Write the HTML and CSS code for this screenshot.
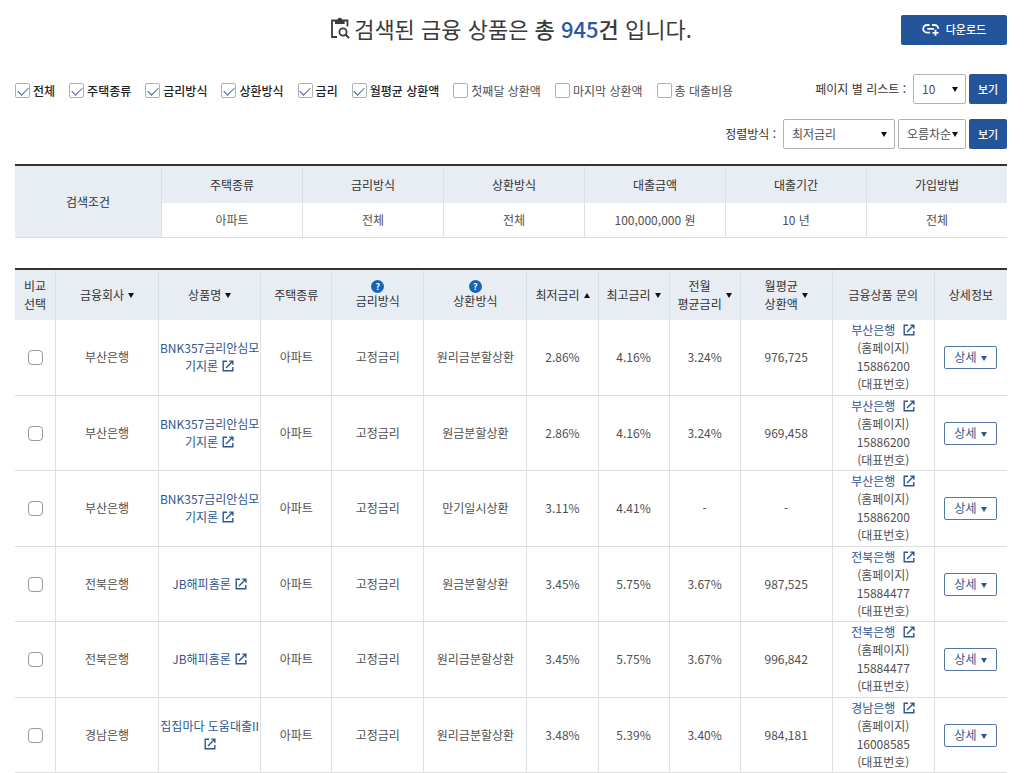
FILE: index.html
```html
<!DOCTYPE html>
<html lang="ko">
<head>
<meta charset="utf-8">
<meta name="viewport" content="width=device-width, initial-scale=1">
<title>금융 상품 검색 결과</title>
<link rel="stylesheet" href="styles.css">
</head>
<body>
<svg class="sprite" aria-hidden="true">
  <symbol id="open" viewBox="0 0 12 12"><path d="M5 1.2H1.2v9.6h9.6V7M7.2 1.1h3.7v3.7M10.7 1.3 4 8" fill="none" stroke="currentColor" stroke-width="1.4"/></symbol>
</svg>
<main class="page">
  <header class="top">
    <h1 class="title">
      <svg class="title-icon" viewBox="0 0 20 22" aria-hidden="true"><path d="M7 20H2V3.500h15.500v6" fill="none" stroke="currentColor" stroke-width="1.800"/><path d="M5 3h2.500a2.300 2.300 0 0 1 4.600 0h2.500v4H5z" fill="currentColor"/><circle cx="13" cy="15" r="3.600" fill="none" stroke="currentColor" stroke-width="1.800"/><path d="m15.500 17.500 3.600 3.600" stroke="currentColor" stroke-width="2"/></svg>
      <span>검색된 금융 상품은 <b>총 <em>945</em>건</b> 입니다.</span>
    </h1>
    <button class="download" type="button">
      <svg class="download-icon" viewBox="0 0 18 13" aria-hidden="true"><path d="M7.500 2H5a3.800 3.800 0 0 0 0 7.600h3M10 2h2.500a3.800 3.800 0 0 1 3.800 3.800M5.300 5.800h6.700M13.500 6.800v6M10.500 9.800h6" fill="none" stroke="currentColor" stroke-width="1.800"/></svg>
      다운로드
    </button>
  </header>

  <form class="controls">
    <div class="bar">
      <div class="filters">
        <label class="filter"><input class="check" type="checkbox" checked><span>전체</span></label>
        <label class="filter"><input class="check" type="checkbox" checked><span>주택종류</span></label>
        <label class="filter"><input class="check" type="checkbox" checked><span>금리방식</span></label>
        <label class="filter"><input class="check" type="checkbox" checked><span>상환방식</span></label>
        <label class="filter"><input class="check" type="checkbox" checked><span>금리</span></label>
        <label class="filter"><input class="check" type="checkbox" checked><span>월평균 상환액</span></label>
        <label class="filter"><input class="check" type="checkbox"><span>첫째달 상환액</span></label>
        <label class="filter"><input class="check" type="checkbox"><span>마지막 상환액</span></label>
        <label class="filter"><input class="check" type="checkbox"><span>총 대출비용</span></label>
      </div>
      <div class="picker">
        <label class="picker-label" for="size">페이지 별 리스트 :</label>
        <span class="select select-size"><select id="size"><option>10</option><option>20</option></select></span>
        <button class="view" type="button">보기</button>
      </div>
    </div>
    <div class="bar bar-end">
      <div class="picker">
        <label class="picker-label" for="sort">정렬방식 :</label>
        <span class="select select-sort"><select id="sort"><option>최저금리</option><option>최고금리</option></select></span>
        <span class="select select-order"><select aria-label="정렬순서"><option>오름차순</option><option>내림차순</option></select></span>
        <button class="view" type="button">보기</button>
      </div>
    </div>
  </form>

  <table class="grid conditions">
    <colgroup><col class="w-name"><col span="6"></colgroup>
    <tr><th rowspan="2" scope="row">검색조건</th><th>주택종류</th><th>금리방식</th><th>상환방식</th><th>대출금액</th><th>대출기간</th><th>가입방법</th></tr>
    <tr><td>아파트</td><td>전체</td><td>전체</td><td>100,000,000 원</td><td>10 년</td><td>전체</td></tr>
  </table>

  <table class="grid results">
    <colgroup><col class="w-pick"><col class="w-bank"><col class="w-product"><col class="w-rate"><col class="w-amount"><col class="w-bank"><col class="w-rate"><col class="w-rate"><col class="w-rate"><col class="w-amount"><col class="w-product"><col class="w-detail"></colgroup>
    <thead>
      <tr>
        <th>비교<br>선택</th>
        <th><button class="sort" type="button">금융회사<i class="arrow"></i></button></th>
        <th><button class="sort" type="button">상품명<i class="arrow"></i></button></th>
        <th>주택종류</th>
        <th><div class="helped"><button class="help" type="button" aria-label="금리방식 도움말">?</button>금리방식</div></th>
        <th><div class="helped"><button class="help" type="button" aria-label="상환방식 도움말">?</button>상환방식</div></th>
        <th><button class="sort" type="button">최저금리<i class="arrow up"></i></button></th>
        <th><button class="sort" type="button">최고금리<i class="arrow"></i></button></th>
        <th><button class="sort" type="button"><span>전월<br>평균금리</span><i class="arrow"></i></button></th>
        <th><button class="sort" type="button"><span>월평균<br>상환액</span><i class="arrow"></i></button></th>
        <th>금융상품 문의</th>
        <th>상세정보</th>
      </tr>
    </thead>
    <tbody>
      <tr>
        <td><input class="check round" type="checkbox" aria-label="비교 선택"></td>
        <td>부산은행</td>
        <td><a href="#">BNK357금리안심모기지론 <svg class="open"><use href="#open"/></svg></a></td>
        <td>아파트</td><td>고정금리</td><td>원리금분할상환</td><td>2.86%</td><td>4.16%</td><td>3.24%</td><td>976,725</td>
        <td><a class="home" href="#">부산은행<svg class="open"><use href="#open"/></svg></a><br>(홈페이지)<br>15886200<br>(대표번호)</td>
        <td><button class="detail" type="button">상세<i class="arrow"></i></button></td>
      </tr>
      <tr>
        <td><input class="check round" type="checkbox" aria-label="비교 선택"></td>
        <td>부산은행</td>
        <td><a href="#">BNK357금리안심모기지론 <svg class="open"><use href="#open"/></svg></a></td>
        <td>아파트</td><td>고정금리</td><td>원금분할상환</td><td>2.86%</td><td>4.16%</td><td>3.24%</td><td>969,458</td>
        <td><a class="home" href="#">부산은행<svg class="open"><use href="#open"/></svg></a><br>(홈페이지)<br>15886200<br>(대표번호)</td>
        <td><button class="detail" type="button">상세<i class="arrow"></i></button></td>
      </tr>
      <tr>
        <td><input class="check round" type="checkbox" aria-label="비교 선택"></td>
        <td>부산은행</td>
        <td><a href="#">BNK357금리안심모기지론 <svg class="open"><use href="#open"/></svg></a></td>
        <td>아파트</td><td>고정금리</td><td>만기일시상환</td><td>3.11%</td><td>4.41%</td><td>-</td><td>-</td>
        <td><a class="home" href="#">부산은행<svg class="open"><use href="#open"/></svg></a><br>(홈페이지)<br>15886200<br>(대표번호)</td>
        <td><button class="detail" type="button">상세<i class="arrow"></i></button></td>
      </tr>
      <tr>
        <td><input class="check round" type="checkbox" aria-label="비교 선택"></td>
        <td>전북은행</td>
        <td><a href="#">JB해피홈론 <svg class="open"><use href="#open"/></svg></a></td>
        <td>아파트</td><td>고정금리</td><td>원금분할상환</td><td>3.45%</td><td>5.75%</td><td>3.67%</td><td>987,525</td>
        <td><a class="home" href="#">전북은행<svg class="open"><use href="#open"/></svg></a><br>(홈페이지)<br>15884477<br>(대표번호)</td>
        <td><button class="detail" type="button">상세<i class="arrow"></i></button></td>
      </tr>
      <tr>
        <td><input class="check round" type="checkbox" aria-label="비교 선택"></td>
        <td>전북은행</td>
        <td><a href="#">JB해피홈론 <svg class="open"><use href="#open"/></svg></a></td>
        <td>아파트</td><td>고정금리</td><td>원리금분할상환</td><td>3.45%</td><td>5.75%</td><td>3.67%</td><td>996,842</td>
        <td><a class="home" href="#">전북은행<svg class="open"><use href="#open"/></svg></a><br>(홈페이지)<br>15884477<br>(대표번호)</td>
        <td><button class="detail" type="button">상세<i class="arrow"></i></button></td>
      </tr>
      <tr>
        <td><input class="check round" type="checkbox" aria-label="비교 선택"></td>
        <td>경남은행</td>
        <td><a href="#">집집마다 도움대출II <svg class="open"><use href="#open"/></svg></a></td>
        <td>아파트</td><td>고정금리</td><td>원리금분할상환</td><td>3.48%</td><td>5.39%</td><td>3.40%</td><td>984,181</td>
        <td><a class="home" href="#">경남은행<svg class="open"><use href="#open"/></svg></a><br>(홈페이지)<br>16008585<br>(대표번호)</td>
        <td><button class="detail" type="button">상세<i class="arrow"></i></button></td>
      </tr>
    </tbody>
  </table>
</main>
</body>
</html>
```
FILE: styles.css
```css
* { box-sizing: border-box; }
body {
  margin: 0;
  background: #fff;
  color: #505050;
  font: 12px/18px "Noto Sans CJK KR", sans-serif;
}
button, select { font: inherit; color: inherit; }
button { cursor: pointer; }
a { color: #2d5690; text-decoration: none; }
.sprite { display: none; }
.page { padding: 15px 17px 0 15px; }

.top { display: grid; grid-template-columns: 1fr auto 1fr; align-items: center; }
.title {
  grid-column: 2;
  display: flex;
  align-items: center;
  gap: 4px;
  margin: 0;
  padding-bottom: 4px;
  color: #3a3a3a;
  font-size: 22px;
  line-height: 26px;
  font-weight: 400;
}
.title b { font-weight: 500; }
.title em { color: #28589f; font-style: normal; }
.title-icon { width: 20px; height: 22px; }
.download {
  justify-self: end;
  display: flex;
  align-items: center;
  justify-content: center;
  gap: 6px;
  width: 106px;
  height: 30px;
  padding: 0 0 2px;
  border: 0;
  border-radius: 2px;
  background: #24559a;
  color: #fff;
  font-size: 11px;
  font-weight: 500;
}
.download-icon { width: 18px; height: 13px; }

.controls { display: grid; gap: 15px; margin: 29px 0 15px; }
.bar { display: flex; justify-content: space-between; align-items: center; }
.bar-end { justify-content: flex-end; }
.filters { display: flex; gap: 14px; padding-top: 3px; }
.filter { display: flex; align-items: center; gap: 3px; white-space: nowrap; }
.filter :checked + span { color: #222; font-weight: 500; }
.check {
  appearance: none;
  display: grid;
  place-items: center;
  flex: none;
  width: 15px;
  height: 15px;
  margin: 0 auto;
  border: 1px solid #b0b0b0;
  border-radius: 2px;
  background: #fff;
}
.check:checked::before {
  content: "";
  width: 9px;
  height: 5px;
  border: solid #4a5fa5;
  border-width: 0 0 1px 1px;
  transform: translateY(-1px) rotate(-45deg);
}
.round { border-color: #999; border-radius: 4px; }
.picker { display: flex; align-items: center; gap: 3px; }
.picker-label { margin-right: 4px; color: #333; }
.select { position: relative; display: block; height: 30px; }
.select select {
  appearance: none;
  width: 100%;
  height: 100%;
  padding: 0 8px;
  border: 1px solid #b3b3b3;
  border-radius: 2px;
  background: #fff;
}
.select::after {
  content: "";
  position: absolute;
  right: 8px;
  top: 13px;
  border: solid transparent;
  border-width: 5px 3px 0;
  border-top-color: #111;
  pointer-events: none;
}
.select-size { width: 53px; }
.select-sort { width: 112px; }
.select-order { width: 68px; }
.view {
  width: 38px;
  height: 30px;
  padding: 0;
  border: 0;
  border-radius: 2px;
  background: #24559a;
  color: #fff;
  font-size: 11px;
  font-weight: 500;
}

.grid { width: 100%; border-spacing: 0; border-top: 2px solid #333; table-layout: fixed; text-align: center; }
.grid th { padding: 0; background: #e8edf4; color: #333; font-weight: 400; }
.grid td { padding: 0; border-bottom: 1px solid #ddd; }
.grid th + th, .grid td + td, .conditions td { border-left: 1px solid #dcdfe3; }
.conditions { margin-bottom: 30px; }
.conditions th { height: 37px; }
.conditions td { height: 35px; }
.conditions th[rowspan] { border-bottom: 1px solid #ddd; }
.w-name { width: 146px; }

.w-pick { width: 40px; }
.w-bank { width: 103px; }
.w-product { width: 102px; }
.w-rate { width: 71px; }
.w-amount { width: 92px; }
.w-detail { width: 73px; }
.results thead th { height: 50px; }
.results tbody td { padding: 1px 0; }
.results tbody tr:nth-child(odd) td { padding-bottom: 2px; }
.sort {
  display: inline-flex;
  align-items: center;
  gap: 4px;
  padding: 0;
  border: 0;
  background: none;
  line-height: 18px;
}
.arrow { flex: none; border: solid transparent; border-width: 5px 3px 0; border-top-color: #111; }
.arrow.up { border-width: 0 3px 5px; border-bottom-color: #111; }
.helped { display: grid; justify-items: center; padding-bottom: 2px; line-height: 16px; }
.help {
  width: 13px;
  height: 13px;
  padding: 0;
  border: 0;
  border-radius: 50%;
  background: #1764b5;
  color: #fff;
  font-size: 9px;
  font-weight: 700;
  line-height: 13px;
}
.open { width: 12px; height: 12px; margin-left: 1px; vertical-align: -1px; }
.home .open { margin-left: 8px; }
.detail {
  display: inline-flex;
  align-items: center;
  justify-content: center;
  gap: 5px;
  width: 53px;
  height: 23px;
  padding: 0;
  border: 1px solid #5577a8;
  border-radius: 2px;
  background: #fff;
  color: #2d5690;
}
.detail .arrow { margin-top: 2px; border-top-color: #2d5690; }
```
